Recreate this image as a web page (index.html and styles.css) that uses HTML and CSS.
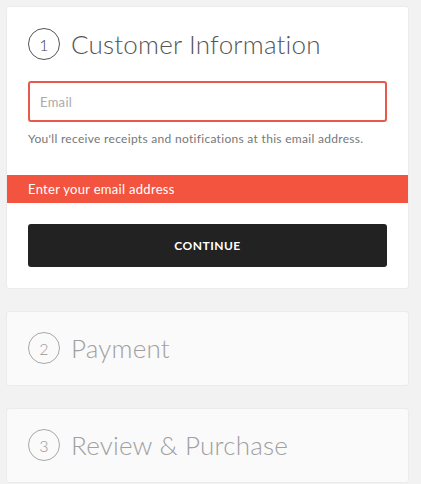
FILE: index.html
```html
<!DOCTYPE html>
<html lang="en">
<head>
  <meta charset="UTF-8" />
  <meta name="viewport" content="width=device-width, initial-scale=1.0"/>
  <title>Checkout</title>
  <link rel="stylesheet" href="styles.css">
</head>
<body>
  <div class="checkout">
    <section class="step active">
      <div class="step-head">
        <span class="step-num">1</span>
        <h2>Customer Information</h2>
      </div>
      <form class="step-body">
        <input type="email" class="field error" placeholder="Email" />
        <p class="hint">You'll receive receipts and notifications at this email address.</p>
      </form>
      <div class="error-bar">Enter your email address</div>
      <div class="step-actions">
        <button type="button" class="btn">CONTINUE</button>
      </div>
    </section>

    <section class="step">
      <div class="step-head">
        <span class="step-num">2</span>
        <h2>Payment</h2>
      </div>
    </section>

    <section class="step">
      <div class="step-head">
        <span class="step-num">3</span>
        <h2>Review &amp; Purchase</h2>
      </div>
    </section>
  </div>
</body>
</html>
```
FILE: styles.css
```css
* {
  box-sizing: border-box;
  font-family: 'Lato', 'Noto Sans', sans-serif;
}

body {
  background: #f2f2f2;
  margin: 0;
  padding: 6px 12px 6px 6px;
}

.checkout {
  display: flex;
  flex-direction: column;
  gap: 22px;
}

.step {
  background: #fafafa;
  border: 1px solid #ebebeb;
  border-radius: 3px;
  padding: 20px 0 21px;
}

.step.active {
  background: #fff;
  padding: 21px 0 21px;
}

.step-head {
  display: flex;
  align-items: center;
  gap: 11px;
  padding: 0 21px;
}

.step-num {
  width: 32px;
  height: 32px;
  border: 1.5px solid #a8a8a8;
  border-radius: 50%;
  display: flex;
  align-items: center;
  justify-content: center;
  font-size: 16px;
  font-weight: 300;
  color: #999;
}

.step.active .step-num {
  border-color: #555;
  color: #444;
}

h2 {
  margin: 0;
  font-size: 26px;
  font-weight: 300;
  letter-spacing: 0.2px;
  color: #a0a0a0;
}

.step.active h2 {
  color: #555;
}

.step-body {
  padding: 21px 21px 0;
  margin: 0;
}

.field {
  display: block;
  width: 100%;
  height: 41px;
  padding: 0 10px;
  border: 1px solid #ccc;
  border-radius: 3px;
  font-size: 13px;
  letter-spacing: 0.3px;
  color: #333;
}

.field::placeholder {
  color: #aaa;
}

.field.error {
  border: 2px solid #e8594a;
}

.hint {
  margin: 9px 0 0;
  font-size: 12px;
  letter-spacing: 0.3px;
  color: #777;
}

.error-bar {
  margin-top: 29px;
  height: 28px;
  padding: 0 21px;
  display: flex;
  align-items: center;
  background: #f2543f;
  color: #fff;
  font-size: 13px;
  letter-spacing: 0.3px;
}

.step-actions {
  padding: 21px 21px 0;
}

.btn {
  width: 100%;
  height: 43px;
  border: none;
  border-radius: 3px;
  background: #222;
  color: #fff;
  font-size: 12px;
  font-weight: bold;
  letter-spacing: 0.5px;
  cursor: pointer;
}
```
